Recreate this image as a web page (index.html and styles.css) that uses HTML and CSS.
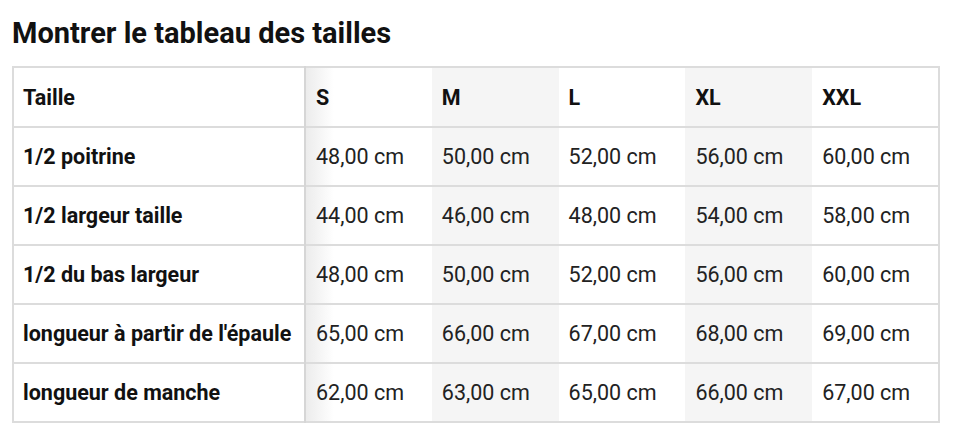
FILE: index.html
```html
<!DOCTYPE html>
<html lang="fr">
<head>
<meta charset="utf-8">
<link rel="stylesheet" href="styles.css">
</head>
<body>
<h2 class="title">Montrer le tableau des tailles</h2>
<table class="sizes">
  <thead>
    <tr><th class="first">Taille</th><th>S</th><th class="alt">M</th><th>L</th><th class="alt">XL</th><th>XXL</th></tr>
  </thead>
  <tbody>
    <tr><th class="first">1/2 poitrine</th><td>48,00 cm</td><td class="alt">50,00 cm</td><td>52,00 cm</td><td class="alt">56,00 cm</td><td>60,00 cm</td></tr>
    <tr><th class="first">1/2 largeur taille</th><td>44,00 cm</td><td class="alt">46,00 cm</td><td>48,00 cm</td><td class="alt">54,00 cm</td><td>58,00 cm</td></tr>
    <tr><th class="first">1/2 du bas largeur</th><td>48,00 cm</td><td class="alt">50,00 cm</td><td>52,00 cm</td><td class="alt">56,00 cm</td><td>60,00 cm</td></tr>
    <tr><th class="first">longueur à partir de l'épaule</th><td>65,00 cm</td><td class="alt">66,00 cm</td><td>67,00 cm</td><td class="alt">68,00 cm</td><td>69,00 cm</td></tr>
    <tr><th class="first">longueur de manche</th><td>62,00 cm</td><td class="alt">63,00 cm</td><td>65,00 cm</td><td class="alt">66,00 cm</td><td>67,00 cm</td></tr>
  </tbody>
</table>
</body>
</html>
```
FILE: styles.css
```css
html, body { margin: 0; padding: 0; background: #fff; }
body {
  font-family: Roboto, "Liberation Sans", sans-serif;
  color: #111;
  padding: 0 14px 0 12px;
}
.title {
  margin: 0;
  padding-top: 16px;
  height: 66px;
  box-sizing: border-box;
  font-size: 29px;
  font-weight: 700;
  line-height: 34px;
  color: #111;
}
.sizes {
  width: 928px;
  border-collapse: collapse;
  border: 2px solid #dcdcdc;
  table-layout: fixed;
  font-size: 21.5px;
}
.sizes th, .sizes td {
  border-top: 2px solid #dcdcdc;
  height: 59px;
  padding: 0 0 0 10px;
  text-align: left;
  vertical-align: middle;
  box-sizing: border-box;
}
.sizes th { font-weight: 700; }
.sizes td { font-weight: 400; color: #222; }
.sizes .first {
  width: 292px;
  border-right: 2px solid #d6d6d6;
  padding-left: 9px;
}
.sizes thead th { height: 60px; }
.sizes .first + * {
  background: linear-gradient(to right, #ececec 0, #fff 28px);
}
.sizes .alt { background: #f5f5f5; }
```
